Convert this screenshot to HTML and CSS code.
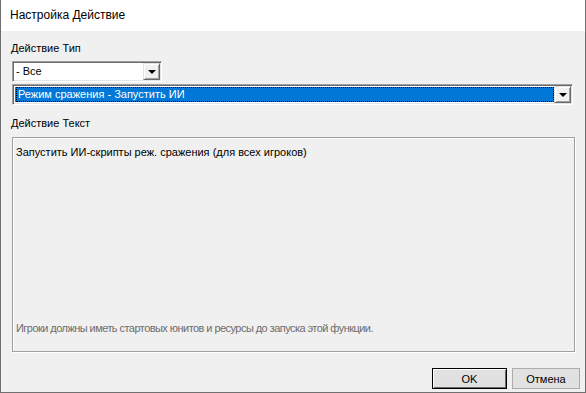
FILE: index.html
```html
<!DOCTYPE html>
<html lang="ru">

<head>
    <meta charset="UTF-8" />
    <title>Настройка Действие</title>
    <link rel="stylesheet" href="styles.css">
</head>

<body>
    <div class="window">
        <div class="titlebar">Настройка Действие</div>

        <div class="content">
            <div class="label">Действие Тип</div>
            <div class="combo combo-small">
                <div class="combo-field">- Все</div>
                <div class="combo-btn"><span class="arrow"></span></div>
            </div>
            <div class="combo combo-wide">
                <div class="combo-field selected"><span class="focus">Режим сражения - Запустить ИИ</span></div>
                <div class="combo-btn"><span class="arrow"></span></div>
            </div>

            <div class="label label-text">Действие Текст</div>
            <div class="textbox">
                <div class="desc">Запустить ИИ-скрипты реж. сражения (для всех игроков)</div>
                <div class="note">Игроки должны иметь стартовых юнитов и ресурсы до запуска этой функции.</div>
            </div>
        </div>

        <div class="buttons">
            <button class="btn btn-default">OK</button>
            <button class="btn">Отмена</button>
        </div>
    </div>
</body>

</html>
```

FILE: styles.css
```css
* {
    box-sizing: border-box;
}

body {
    margin: 0;
    font-family: 'Liberation Sans', Arial, sans-serif;
    font-size: 11px;
    color: #000;
    background: #f0f0f0;
}

.window {
    width: 586px;
    height: 393px;
    display: flex;
    flex-direction: column;
    background: #f0f0f0;
    border: 1px solid #6f6f6f;
    border-top: none;
}

.titlebar {
    height: 31px;
    background: #ffffff;
    padding-left: 9px;
    font-size: 12px;
    line-height: 31px;
    flex-shrink: 0;
}

.content {
    flex: 1;
    padding: 11px 10px 0 10px;
    display: flex;
    flex-direction: column;
}

.label {
    height: 13px;
    line-height: 13px;
}

.label-text {
    margin-top: 12px;
}

.combo {
    display: flex;
    height: 21px;
    margin-left: 1px;
    border: 1px solid;
    border-color: #a0a0a0 #ffffff #ffffff #a0a0a0;
    box-shadow: inset 1px 1px 0 #696969, inset -1px -1px 0 #e3e3e3;
    background: #ffffff;
    padding: 2px;
}

.combo-small {
    width: 150px;
    margin-top: 6px;
}

.combo-wide {
    width: 561px;
    margin-top: 2px;
}

.combo-field {
    flex: 1;
    line-height: 15px;
    padding-left: 1px;
    white-space: nowrap;
    overflow: hidden;
}

.combo-field.selected {
    background: #0078d7;
    color: #ffffff;
}

.focus {
    display: block;
    height: 15px;
    line-height: 13px;
    border: 1px dotted #ff8c00;
    outline: 1px dotted #000;
    outline-offset: -1px;
    padding-left: 1px;
}

.combo-btn {
    width: 17px;
    height: 17px;
    margin: -1px -1px 0 0;
    background: #f0f0f0;
    border: 1px solid;
    border-color: #e3e3e3 #696969 #696969 #e3e3e3;
    box-shadow: inset 1px 1px 0 #ffffff, inset -1px -1px 0 #a0a0a0;
    display: flex;
    align-items: center;
    justify-content: center;
}

.arrow {
    width: 0;
    height: 0;
    border-left: 4px solid transparent;
    border-right: 4px solid transparent;
    border-top: 4px solid #000;
    margin-top: 1px;
}

.textbox {
    margin-top: 7px;
    margin-left: 1px;
    width: 563px;
    height: 215px;
    border: 1px solid #a0a0a0;
    box-shadow: inset 1px 1px 0 #ffffff, 1px 1px 0 #ffffff;
    padding: 8px 4px 8px 3px;
    display: flex;
    flex-direction: column;
    justify-content: space-between;
}

.desc {
    line-height: 13px;
}

.note {
    color: #6d6d6d;
    line-height: 13px;
    margin-bottom: 8px;
    letter-spacing: -0.55px;
}

.buttons {
    display: flex;
    justify-content: flex-end;
    gap: 5px;
    padding: 0 5px 3px 0;
}

.btn {
    font-family: 'Liberation Sans', Arial, sans-serif;
    font-size: 11px;
    height: 21px;
    background: #e1e1e1;
    border: 1px solid #adadad;
    padding: 0;
    width: 68px;
    color: #000;
}

.btn-default {
    width: 75px;
    border: 1px solid #000;
    box-shadow: inset 1px 1px 0 #ffffff, inset -1px -1px 0 #696969;
}
```
